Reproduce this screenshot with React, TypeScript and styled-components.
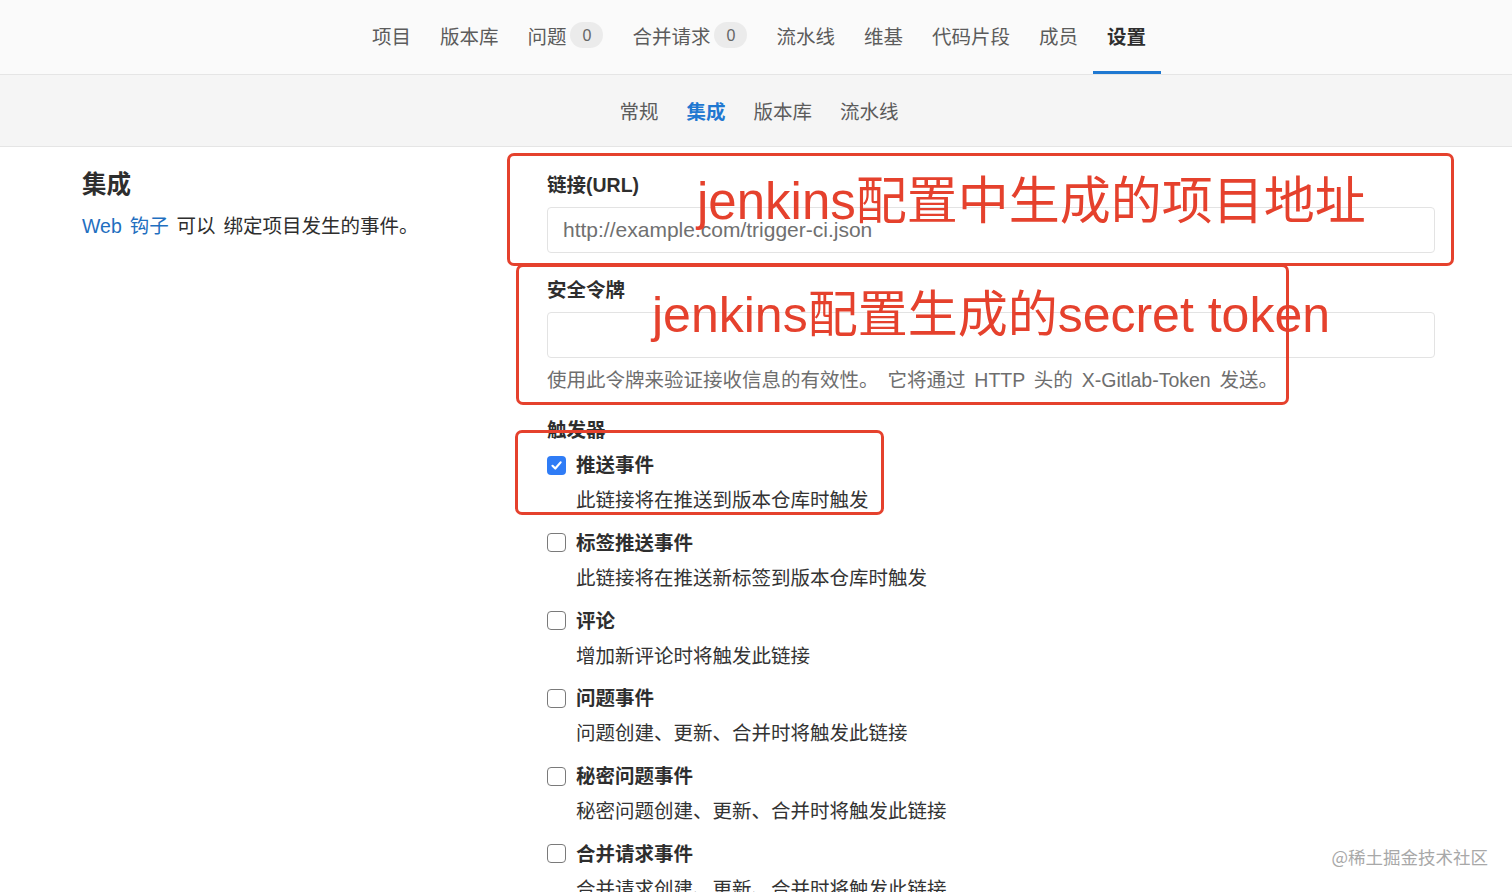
import styled, { createGlobalStyle } from 'styled-components'

const GlobalStyle = createGlobalStyle`
  html, body {
    margin: 0;
    padding: 0;
    overflow: hidden;
    background: #fff;
  }
  body {
    font-family: "Liberation Sans", "Noto Sans CJK SC", sans-serif;
    color: #2e2e2e;
  }
`

const navItems = ['项目', '版本库', '问题', '合并请求', '流水线', '维基', '代码片段', '成员', '设置']
const badges: Record<string, string> = { 问题: '0', 合并请求: '0' }
const subItems = ['常规', '集成', '版本库', '流水线']

const triggers = [
  { title: '推送事件', desc: '此链接将在推送到版本仓库时触发', checked: true },
  { title: '标签推送事件', desc: '此链接将在推送新标签到版本仓库时触发', checked: false },
  { title: '评论', desc: '增加新评论时将触发此链接', checked: false },
  { title: '问题事件', desc: '问题创建、更新、合并时将触发此链接', checked: false },
  { title: '秘密问题事件', desc: '秘密问题创建、更新、合并时将触发此链接', checked: false },
  { title: '合并请求事件', desc: '合并请求创建、更新、合并时将触发此链接', checked: false },
]

export default function App() {
  return (
    <Page>
      <GlobalStyle />
      <TopNav>
        {navItems.map((item) => (
          <NavItem key={item} $active={item === '设置'}>
            {item}
            {badges[item] && <Badge>{badges[item]}</Badge>}
          </NavItem>
        ))}
      </TopNav>
      <SubNav>
        {subItems.map((item) => (
          <SubItem key={item} $active={item === '集成'}>{item}</SubItem>
        ))}
      </SubNav>
      <Content>
        <Sidebar>
          <Heading>集成</Heading>
          <Intro>
            <Link>Web 钩子</Link> 可以 绑定项目发生的事件。
          </Intro>
        </Sidebar>
        <Form>
          <Group>
            <Label>链接(URL)</Label>
            <Input placeholder="http://example.com/trigger-ci.json" />
          </Group>
          <Group>
            <Label>安全令牌</Label>
            <Input />
            <Help>使用此令牌来验证接收信息的有效性。 它将通过 HTTP 头的 X-Gitlab-Token 发送。</Help>
          </Group>
          <Label $tight>触发器</Label>
          {triggers.map((t) => (
            <Trigger key={t.title}>
              <CheckRow>
                <Check $checked={t.checked}>
                  {t.checked && (
                    <svg width="13" height="13" viewBox="0 0 13 13">
                      <path d="M2.5 6.8 L5.3 9.5 L10.6 3.4" fill="none" stroke="#fff" strokeWidth="2.2" strokeLinecap="round" strokeLinejoin="round" />
                    </svg>
                  )}
                </Check>
                {t.title}
              </CheckRow>
              <Desc>{t.desc}</Desc>
            </Trigger>
          ))}
        </Form>
      </Content>

      <Marker $left={507} $top={153} $width={947} $height={113} />
      <Marker $left={516} $top={264} $width={773} $height={141} />
      <Marker $left={515} $top={430} $width={369} $height={85} />
      <Note $left={697} $top={176} $size={51}>jenkins配置中生成的项目地址</Note>
      <Note $left={652} $top={290} $size={50}>jenkins配置生成的secret token</Note>
      <Watermark>@稀土掘金技术社区</Watermark>
    </Page>
  )
}

const Page = styled.div`
  position: relative;
  height: 100vh;
  overflow: hidden;
`

const TopNav = styled.nav`
  display: flex;
  justify-content: center;
  height: 74px;
  padding-left: 6px;
  background: #fafafa;
  border-bottom: 1px solid #e5e5e5;
`

const NavItem = styled.div<{ $active?: boolean }>`
  display: flex;
  align-items: center;
  padding: 0 14.5px 4px;
  font-size: 19.5px;
  color: ${(p) => (p.$active ? '#2e2e2e' : '#5c5c5c')};
  font-weight: ${(p) => (p.$active ? 700 : 400)};
  box-shadow: ${(p) => (p.$active ? 'inset 0 -3px 0 #1f78d1' : 'none')};
`

const Badge = styled.span`
  display: inline-flex;
  align-items: center;
  justify-content: center;
  margin-left: 4px;
  min-width: 33px;
  height: 26px;
  padding-top: 2px;
  box-sizing: border-box;
  border-radius: 13px;
  background: #ebebeb;
  color: #666;
  font-size: 16px;
`

const SubNav = styled.nav`
  display: flex;
  justify-content: center;
  align-items: center;
  height: 72px;
  padding: 0 0 0 6px;
  box-sizing: border-box;
  background: #f5f5f5;
  border-bottom: 1px solid #e5e5e5;
`

const SubItem = styled.div<{ $active?: boolean }>`
  padding: 0 14px;
  font-size: 19.5px;
  color: ${(p) => (p.$active ? '#1f78d1' : '#5c5c5c')};
  font-weight: ${(p) => (p.$active ? 700 : 400)};
`

const Content = styled.main`
  display: flex;
  padding: 24px 0 0 82px;
`

const Sidebar = styled.aside`
  flex: none;
  width: 465px;
`

const Heading = styled.h4`
  margin: 0 0 13px;
  font-size: 24.5px;
  line-height: 28px;
  font-weight: 700;
`

const Intro = styled.p`
  margin: 0;
  font-size: 19.5px;
  line-height: 28px;
  word-spacing: 2.5px;
`

const Link = styled.a`
  color: #1f6fc0;
  text-decoration: none;
`

const Form = styled.div`
  flex: none;
  width: 888px;
`

const Group = styled.div`
  margin-bottom: 22.5px;
`

const Label = styled.label<{ $tight?: boolean }>`
  display: block;
  margin-bottom: ${(p) => (p.$tight ? 7 : 8)}px;
  font-size: 19.5px;
  line-height: 28px;
  font-weight: 700;
  color: #2e2e2e;
`

const Input = styled.input`
  display: block;
  box-sizing: border-box;
  width: 100%;
  height: 46px;
  padding: 0 15px;
  border: 1px solid #e3e3e3;
  border-radius: 4px;
  font-family: inherit;
  font-size: 21px;
  color: #2e2e2e;
  outline: none;
  &::placeholder {
    color: #707070;
  }
`

const Help = styled.p`
  margin: 8px 0 0;
  font-size: 19.5px;
  line-height: 28px;
  word-spacing: 3.5px;
  color: #6e6e6e;
`

const Trigger = styled.div`
  margin: 0 0 14.8px;
`

const CheckRow = styled.div`
  display: flex;
  align-items: center;
  gap: 10px;
  font-size: 19.5px;
  line-height: 28px;
  font-weight: 700;
`

const Check = styled.span<{ $checked?: boolean }>`
  display: inline-flex;
  align-items: center;
  justify-content: center;
  box-sizing: border-box;
  width: 19px;
  height: 19px;
  border-radius: 4px;
  background: ${(p) => (p.$checked ? '#2f7cf6' : '#fff')};
  border: ${(p) => (p.$checked ? 'none' : '1.5px solid #7a7a7a')};
`

const Desc = styled.div`
  margin: 7px 0 0 29px;
  font-size: 19.5px;
  line-height: 28px;
  color: #333;
`

const Marker = styled.div<{ $left: number; $top: number; $width: number; $height: number }>`
  position: absolute;
  left: ${(p) => p.$left}px;
  top: ${(p) => p.$top}px;
  width: ${(p) => p.$width}px;
  height: ${(p) => p.$height}px;
  box-sizing: border-box;
  border: 3px solid #e5412d;
  border-radius: 7px;
  pointer-events: none;
`

const Note = styled.div<{ $left: number; $top: number; $size: number }>`
  position: absolute;
  left: ${(p) => p.$left}px;
  top: ${(p) => p.$top}px;
  font-family: "Liberation Sans", "Noto Sans CJK SC", sans-serif;
  font-size: ${(p) => p.$size}px;
  line-height: 1;
  color: #e5412d;
  white-space: nowrap;
  pointer-events: none;
`

const Watermark = styled.div`
  position: absolute;
  right: 24px;
  top: 845px;
  font-family: "Noto Sans CJK SC", sans-serif;
  font-size: 17.5px;
  line-height: 24px;
  color: #a8a8a8;
  text-shadow: 0 0 1px #fff;
`
